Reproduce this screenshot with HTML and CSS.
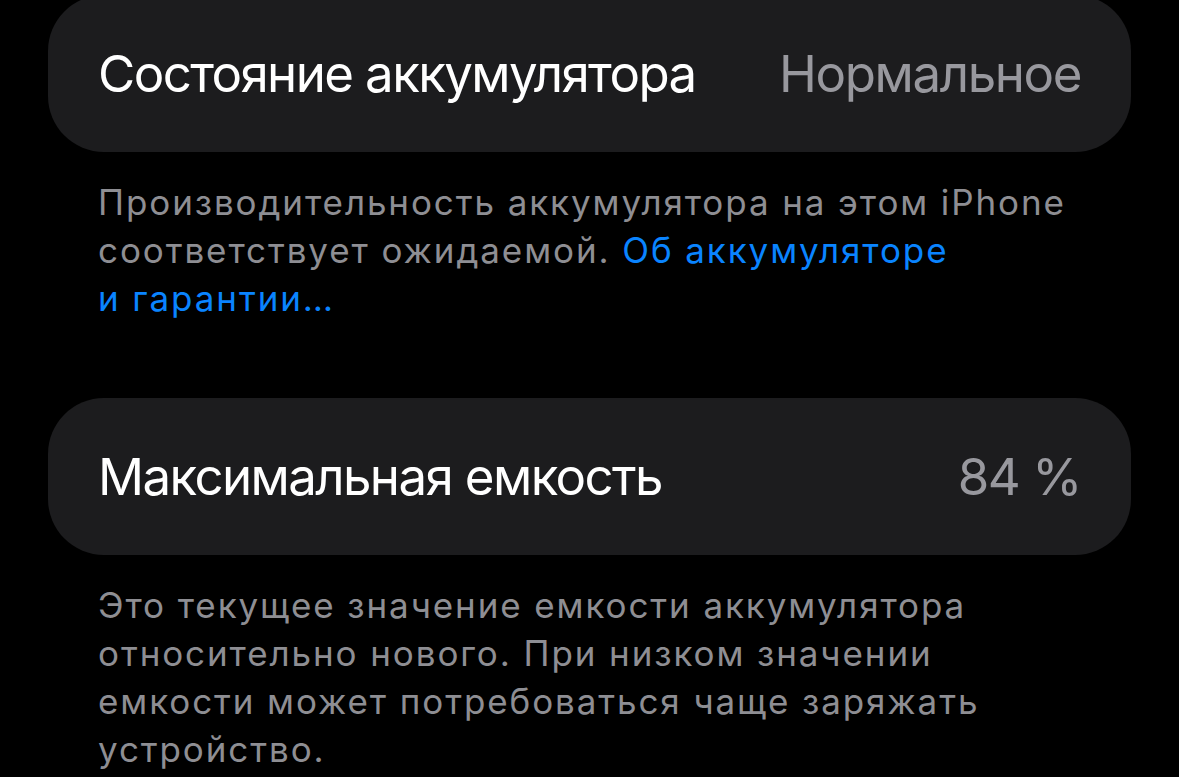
FILE: index.html
```html
<!DOCTYPE html>
<html lang="ru">
<head>
  <meta charset="UTF-8" />
  <title>Состояние аккумулятора</title>
  <link rel="stylesheet" href="styles.css">
</head>
<body>
  <div class="settings">
    <!-- Battery health -->
    <div class="cell cell-first">
      <span class="cell-title">Состояние аккумулятора</span>
      <span class="cell-value">Нормальное</span>
    </div>
    <p class="footer">
      Производительность аккумулятора на этом iPhone<br>
      соответствует ожидаемой. <a href="#" class="link">Об аккумуляторе<br>и гарантии…</a>
    </p>

    <!-- Max capacity -->
    <div class="cell">
      <span class="cell-title">Максимальная емкость</span>
      <span class="cell-value">84 %</span>
    </div>
    <p class="footer">
      Это текущее значение емкости аккумулятора<br>
      относительно нового. При низком значении<br>
      емкости может потребоваться чаще заряжать<br>
      устройство.
    </p>
  </div>
</body>
</html>
```

FILE: styles.css
```css
body {
  margin: 0;
  background: #000;
  font-family: Inter, "Noto Sans", sans-serif;
  overflow: hidden;
}

.settings {
  padding: 0 48px;
}

.cell {
  display: flex;
  align-items: center;
  justify-content: space-between;
  height: 157px;
  padding: 0 50px;
  box-sizing: border-box;
  background: #1c1c1e;
  border-radius: 56px;
}

/* first card is cut off at the top of the screen */
.cell-first {
  margin-top: -5px;
}

.cell-title {
  color: #fff;
  font-size: 51px;
  letter-spacing: -1.6px;
}

.cell-value {
  color: #98989e;
  font-size: 51px;
  letter-spacing: -1.4px;
}

.footer {
  margin: 0 0 76px;
  padding: 26px 50px 0;
  color: #8e8e93;
  font-size: 35px;
  line-height: 48px;
  letter-spacing: 1.9px;
}

.link {
  color: #0a84ff;
  text-decoration: none;
}
```
